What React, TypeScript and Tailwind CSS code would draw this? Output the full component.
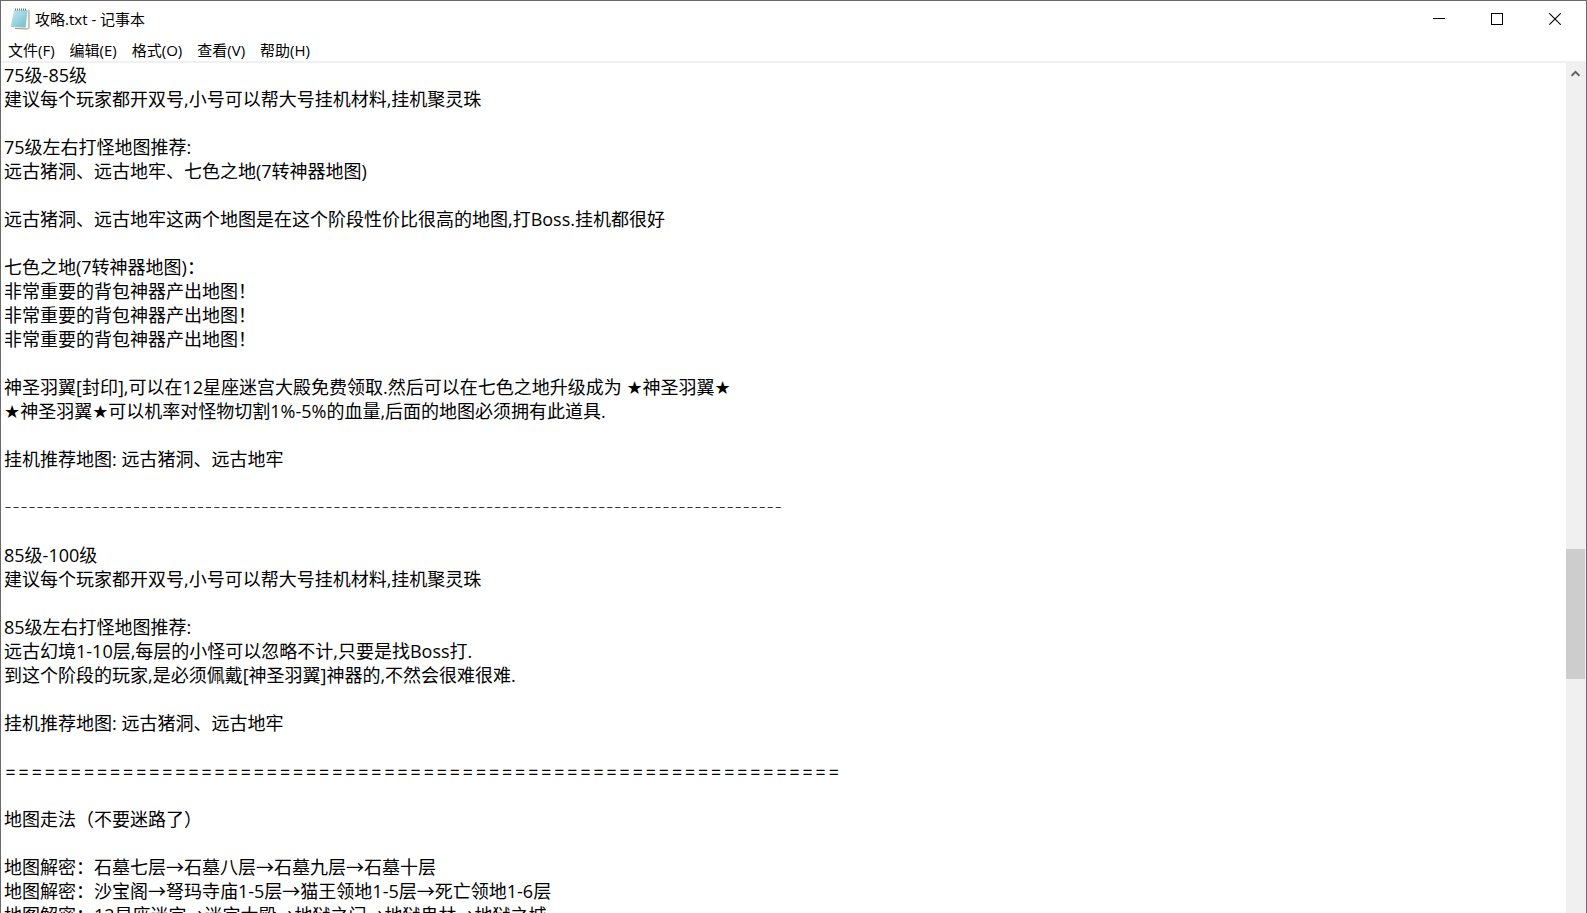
import { useState } from "react";

type Section = { label: string; text: string; className: string };

const sections: Section[] = [
  {
    label: "75级-85级",
    text: `75级-85级
建议每个玩家都开双号,小号可以帮大号挂机材料,挂机聚灵珠

75级左右打怪地图推荐:
远古猪洞、远古地牢、七色之地(7转神器地图)

远古猪洞、远古地牢这两个地图是在这个阶段性价比很高的地图,打Boss.挂机都很好

七色之地(7转神器地图)：
非常重要的背包神器产出地图！
非常重要的背包神器产出地图！
非常重要的背包神器产出地图！

神圣羽翼[封印],可以在12星座迷宫大殿免费领取.然后可以在七色之地升级成为 ★神圣羽翼★
★神圣羽翼★可以机率对怪物切割1%-5%的血量,后面的地图必须拥有此道具.

挂机推荐地图: 远古猪洞、远古地牢
`,
    className: "text-[18px] font-['Open_Sans','DejaVu_Sans','Noto_Sans_CJK_SC',sans-serif]",
  },
  {
    label: "分隔线",
    text: "-".repeat(97),
    className: "text-[18px] font-extralight font-['Inter',sans-serif]",
  },
  {
    label: "85级-100级",
    text: `
85级-100级
建议每个玩家都开双号,小号可以帮大号挂机材料,挂机聚灵珠

85级左右打怪地图推荐:
远古幻境1-10层,每层的小怪可以忽略不计,只要是找Boss打.
到这个阶段的玩家,是必须佩戴[神圣羽翼]神器的,不然会很难很难.

挂机推荐地图: 远古猪洞、远古地牢
`,
    className: "text-[18px] font-['Open_Sans','Noto_Sans_CJK_SC',sans-serif]",
  },
  {
    label: "双分隔线",
    text: "=".repeat(64),
    className: "text-[20px] font-light font-['Inter',sans-serif]",
  },
  {
    label: "地图走法",
    text: `
地图走法（不要迷路了）

地图解密：石墓七层→石墓八层→石墓九层→石墓十层
地图解密：沙宝阁→弩玛寺庙1-5层→猫王领地1-5层→死亡领地1-6层
地图解密：12星座迷宫→迷宫大殿→地狱之门→地狱鬼林→地狱之城`,
    className: "text-[18px] font-['Open_Sans','Noto_Sans_CJK_SC',sans-serif]",
  },
];

const menus = ["文件(F)", "编辑(E)", "格式(O)", "查看(V)", "帮助(H)"];

function NotepadIcon() {
  return (
    <svg width="20" height="22" viewBox="0 0 20 22" aria-hidden="true">
      <defs>
        <linearGradient id="page" x1="0" y1="0" x2="1" y2="1">
          <stop offset="0" stopColor="#c4e9f0" />
          <stop offset="0.5" stopColor="#9ad3e0" />
          <stop offset="1" stopColor="#6fb9cb" />
        </linearGradient>
      </defs>
      <path d="M4 2.5 19.5 2 19.5 20.5 17 21.5 5 21Z" fill="#a3926f" />
      <path d="M4 2 18.5 2 18.5 20.5 4 20Z" fill="#f4f6f2" />
      <path d="M4 2 17.5 2 15.5 19.5 0.8 19Z" fill="url(#page)" />
      <path d="M5 1.5H17" stroke="#6f7f84" strokeWidth="2" strokeDasharray="1 1" />
    </svg>
  );
}

function TitleBar() {
  const button = "flex h-9 w-[58px] items-center justify-center hover:bg-neutral-200";
  return (
    <header className="flex h-[39px] shrink-0 justify-between pr-0.5 pl-[9px]">
      <div className="flex h-9 items-center gap-[5px]">
        <NotepadIcon />
        <h1 className="text-[15px] leading-5">攻略.txt - 记事本</h1>
      </div>
      <div className="flex">
        <button type="button" aria-label="最小化" className={button}>
          <svg width="12" height="12" shapeRendering="crispEdges">
            <path d="M0 5.5H12" stroke="#000" />
          </svg>
        </button>
        <button type="button" aria-label="最大化" className={button}>
          <svg width="12" height="12" shapeRendering="crispEdges">
            <rect x="0.5" y="0.5" width="11" height="11" fill="none" stroke="#000" />
          </svg>
        </button>
        <button type="button" aria-label="关闭" className={button}>
          <svg width="12" height="12">
            <path d="M0.3 0.3 11.7 11.7M11.7 0.3 0.3 11.7" stroke="#000" strokeWidth="1.1" />
          </svg>
        </button>
      </div>
    </header>
  );
}

function MenuBar() {
  return (
    <nav className="flex h-[23px] shrink-0 items-start gap-px border-b-2 border-[#f0f0f0]">
      {menus.map((menu) => (
        <button key={menu} type="button" className="px-[7px] text-[15px] leading-5 hover:bg-sky-100">
          {menu}
        </button>
      ))}
    </nav>
  );
}

function Editor() {
  const [texts, setTexts] = useState(sections.map((section) => section.text));
  return (
    <main className="min-w-0 flex-1 overflow-hidden pl-[3px]">
      {sections.map((section, i) => (
        <textarea
          key={section.label}
          aria-label={section.label}
          spellCheck={false}
          wrap="off"
          rows={texts[i].split("\n").length}
          value={texts[i]}
          onChange={(e) => setTexts(texts.map((t, j) => (j === i ? e.target.value : t)))}
          className={`block w-full resize-none overflow-hidden leading-6 outline-none ${section.className}`}
        />
      ))}
    </main>
  );
}

function ScrollBar() {
  return (
    <aside className="flex w-5 shrink-0 flex-col bg-[#f0f0f0] pr-px">
      <button type="button" aria-label="向上滚动" className="flex h-5 shrink-0 items-center justify-center">
        <svg width="9" height="7" viewBox="0 0 9 7">
          <path d="M0.5 5.8 4.5 1.8 8.5 5.8" fill="none" stroke="#606060" strokeWidth="2" />
        </svg>
      </button>
      <div className="flex flex-1 flex-col">
        <div className="grow-[466]" />
        <div
          role="scrollbar"
          aria-label="垂直滚动条"
          aria-controls="editor"
          aria-valuenow={66}
          className="h-[130px] bg-[#cdcdcd]"
        />
        <div className="grow-[234]" />
      </div>
    </aside>
  );
}

export default function App() {
  return (
    <div className="flex h-screen flex-col overflow-hidden border-x border-t border-[#6b696b] bg-white font-['Open_Sans','Noto_Sans_CJK_SC',sans-serif] text-black">
      <TitleBar />
      <MenuBar />
      <div id="editor" className="flex min-h-0 flex-1">
        <Editor />
        <ScrollBar />
      </div>
    </div>
  );
}
